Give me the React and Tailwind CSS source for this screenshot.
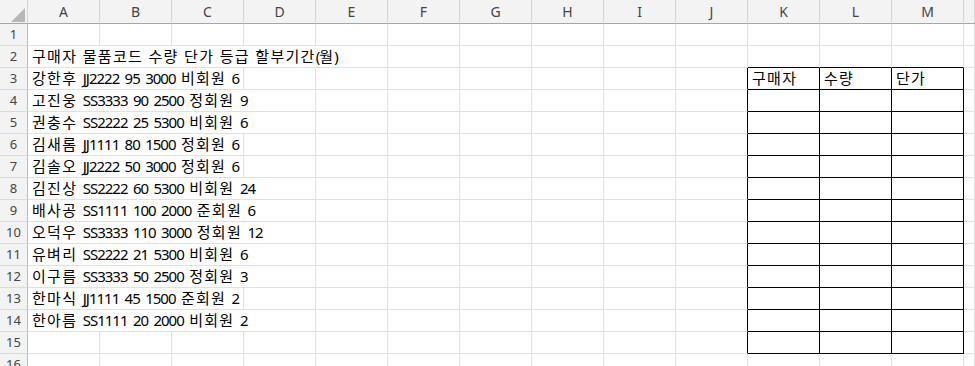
import React from 'react';

const COLS = ['A', 'B', 'C', 'D', 'E', 'F', 'G', 'H', 'I', 'J', 'K', 'L', 'M', ''];

// text in column A, and how many columns it overflows into
const ROWS = {
  2: { text: '구매자 물품코드 수량 단가 등급 할부기간(월)', span: 5 },
  3: { text: '강한후 JJ2222 95 3000 비회원 6', span: 3 },
  4: { text: '고진웅 SS3333 90 2500 정회원 9', span: 4 },
  5: { text: '권충수 SS2222 25 5300 비회원 6', span: 4 },
  6: { text: '김새롬 JJ1111 80 1500 정회원 6', span: 3 },
  7: { text: '김솔오 JJ2222 50 3000 정회원 6', span: 3 },
  8: { text: '김진상 SS2222 60 5300 비회원 24', span: 4 },
  9: { text: '배사공 SS1111 100 2000 준회원 6', span: 4 },
  10: { text: '오덕우 SS3333 110 3000 정회원 12', span: 4 },
  11: { text: '유벼리 SS2222 21 5300 비회원 6', span: 4 },
  12: { text: '이구름 SS3333 50 2500 정회원 3', span: 4 },
  13: { text: '한마식 JJ1111 45 1500 준회원 2', span: 3 },
  14: { text: '한아름 SS1111 20 2000 비회원 2', span: 4 },
};

const TABLE_HEAD = { 10: '구매자', 11: '수량', 12: '단가' };

const font = { fontFamily: '"Noto Sans", "Noto Sans CJK KR", sans-serif' };

// hangul, spaces and latin get slightly different spacing to match the sheet font
const Text = ({ children }) => {
  const parts = children.split(/([\uAC00-\uD7A3]+|\s+)/).filter(Boolean);
  return (
    <span>
      {parts.map((p, i) =>
        /^\s+$/.test(p) ? (
          <span key={i} className="inline-block w-[5.4px]" />
        ) : /[\uAC00-\uD7A3]/.test(p) ? (
          <span key={i} className="tracking-[1.3px]">{p}</span>
        ) : (
          <span key={i} className="tracking-[-1px]">{p}</span>
        )
      )}
    </span>
  );
};

const Cell = ({ r, c, span = 1, children }) => {
  const last = c + span - 1;
  const blackRight = r >= 3 && r <= 15 && last >= 9 && last <= 12;
  const blackBottom = r >= 2 && r <= 15 && c >= 10 && c <= 12;
  return (
    <div
      className={`h-[22px] border-r border-b flex items-center pl-[4px] text-[15px] text-black whitespace-nowrap ${
        blackRight ? 'border-r-black' : 'border-r-[#e1e1e1]'
      } ${blackBottom ? 'border-b-black' : 'border-b-[#e1e1e1]'} ${
        span === 3 ? 'col-span-3' : span === 4 ? 'col-span-4' : span === 5 ? 'col-span-5' : ''
      }`}
    >
      {children ? <Text>{children}</Text> : null}
    </div>
  );
};

const Row = ({ r }) => {
  const data = ROWS[r];
  const cells = [];
  let c = 0;
  if (data) {
    cells.push(<Cell key={0} r={r} c={0} span={data.span}>{data.text}</Cell>);
    c = data.span;
  }
  for (; c < COLS.length; c++) {
    cells.push(
      <Cell key={c} r={r} c={c}>
        {r === 3 ? TABLE_HEAD[c] : null}
      </Cell>
    );
  }
  return (
    <>
      <div className="h-[22px] bg-[#f3f3f3] border-r border-b border-r-[#bdbdbd] border-b-[#dadada] flex items-center justify-center text-[13px] text-[#444]">
        {r}
      </div>
      {cells}
    </>
  );
};

export default function App() {
  const rows = Array.from({ length: 16 }, (_, i) => i + 1);
  return (
    <div className="w-[975px] h-[366px] overflow-hidden bg-white" style={font}>
      <div className="grid grid-cols-[28px_repeat(13,72px)_1fr]">
        {/* corner */}
        <div className="h-[24px] bg-[#f3f3f3] border-r border-b border-r-[#d4d4d4] border-b-[#a6a6a6] relative">
          <svg className="absolute left-[11px] top-[8px]" width="14" height="14" viewBox="0 0 14 14">
            <polygon points="14,0 14,14 0,14" fill="#b7b7b7" />
          </svg>
        </div>
        {COLS.map((col, i) => (
          <div
            key={i}
            className="h-[24px] bg-[#f3f3f3] border-r border-b border-r-[#d4d4d4] border-b-[#a6a6a6] flex items-center justify-center text-[14px] text-[#444]"
          >
            {col}
          </div>
        ))}
        {rows.map((r) => (
          <Row key={r} r={r} />
        ))}
      </div>
    </div>
  );
}
